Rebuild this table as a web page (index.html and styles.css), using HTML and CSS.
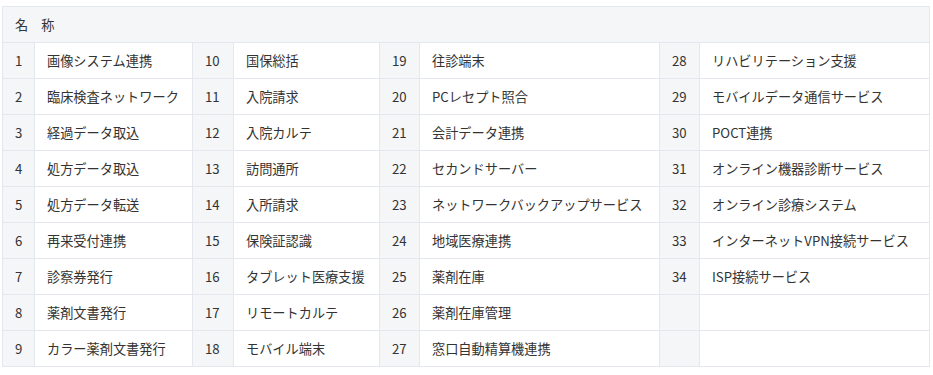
FILE: index.html
```html
<!DOCTYPE html>
<html lang="ja">
<head>
<meta charset="utf-8">
<link rel="stylesheet" href="styles.css">
</head>
<body>
<table class="grid">
  <colgroup>
    <col class="c-n1"><col class="c-t1">
    <col class="c-n2"><col class="c-t2">
    <col class="c-n3"><col class="c-t3">
    <col class="c-n4"><col class="c-t4">
  </colgroup>
  <thead>
    <tr><th colspan="8" class="head">名　称</th></tr>
  </thead>
  <tbody>
    <tr><td class="num">1</td><td>画像システム連携</td><td class="num">10</td><td>国保総括</td><td class="num">19</td><td>往診端末</td><td class="num">28</td><td>リハビリテーション支援</td></tr>
    <tr><td class="num">2</td><td>臨床検査ネットワーク</td><td class="num">11</td><td>入院請求</td><td class="num">20</td><td>PCレセプト照合</td><td class="num">29</td><td>モバイルデータ通信サービス</td></tr>
    <tr><td class="num">3</td><td>経過データ取込</td><td class="num">12</td><td>入院カルテ</td><td class="num">21</td><td>会計データ連携</td><td class="num">30</td><td>POCT連携</td></tr>
    <tr><td class="num">4</td><td>処方データ取込</td><td class="num">13</td><td>訪問通所</td><td class="num">22</td><td>セカンドサーバー</td><td class="num">31</td><td>オンライン機器診断サービス</td></tr>
    <tr><td class="num">5</td><td>処方データ転送</td><td class="num">14</td><td>入所請求</td><td class="num">23</td><td>ネットワークバックアップサービス</td><td class="num">32</td><td>オンライン診療システム</td></tr>
    <tr><td class="num">6</td><td>再来受付連携</td><td class="num">15</td><td>保険証認識</td><td class="num">24</td><td>地域医療連携</td><td class="num">33</td><td>インターネットVPN接続サービス</td></tr>
    <tr><td class="num">7</td><td>診察券発行</td><td class="num">16</td><td>タブレット医療支援</td><td class="num">25</td><td>薬剤在庫</td><td class="num">34</td><td>ISP接続サービス</td></tr>
    <tr><td class="num">8</td><td>薬剤文書発行</td><td class="num">17</td><td>リモートカルテ</td><td class="num">26</td><td>薬剤在庫管理</td><td class="num"></td><td></td></tr>
    <tr><td class="num">9</td><td>カラー薬剤文書発行</td><td class="num">18</td><td>モバイル端末</td><td class="num">27</td><td>窓口自動精算機連携</td><td class="num"></td><td></td></tr>
  </tbody>
</table>
</body>
</html>
```

FILE: styles.css
```css
html, body {
  margin: 0;
  padding: 0;
  background: #ffffff;
}
body {
  padding: 6px 4px 0 2px;
  font-family: "Noto Sans CJK JP", "Noto Sans", sans-serif;
  font-size: 13.2px;
  color: #333333;
}
.grid {
  width: 927px;
  border-collapse: collapse;
  table-layout: fixed;
}
.c-n1 { width: 32px; }
.c-t1 { width: 158px; }
.c-n2 { width: 41px; }
.c-t2 { width: 146px; }
.c-n3 { width: 40px; }
.c-t3 { width: 240px; }
.c-n4 { width: 40px; }
.c-t4 { width: 230px; }
.grid th, .grid td {
  border: 1px solid #e4e7ed;
  height: 36px;
  padding: 0 12px;
  box-sizing: border-box;
  text-align: left;
  font-weight: normal;
  white-space: nowrap;
  line-height: 20px;
}
.head {
  background: #f5f6f8;
}
.num {
  background: #f5f6f8;
}
```
